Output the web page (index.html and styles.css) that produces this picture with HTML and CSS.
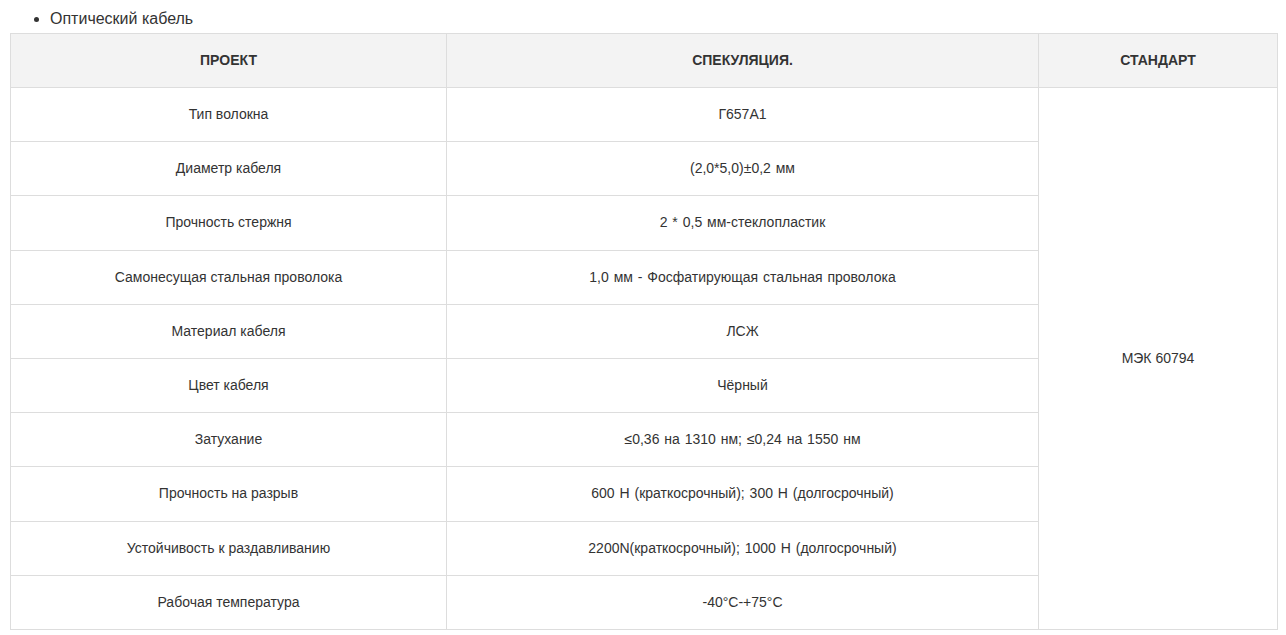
FILE: index.html
```html
<!DOCTYPE html>
<html lang="ru">
<head>
<meta charset="utf-8">
<title>Оптический кабель</title>
<link rel="stylesheet" href="styles.css">
</head>
<body>
<ul class="list">
  <li>Оптический кабель</li>
</ul>
<table class="spec">
  <colgroup>
    <col class="c1"><col class="c2"><col class="c3">
  </colgroup>
  <thead>
    <tr><th>ПРОЕКТ</th><th>СПЕКУЛЯЦИЯ.</th><th>СТАНДАРТ</th></tr>
  </thead>
  <tbody>
    <tr><td>Тип волокна</td><td class="num">Г657А1</td><td rowspan="10">МЭК 60794</td></tr>
    <tr><td>Диаметр кабеля</td><td class="num">(2,0*5,0)±0,2 мм</td></tr>
    <tr><td>Прочность стержня</td><td class="num">2 * 0,5 мм-стеклопластик</td></tr>
    <tr><td>Самонесущая стальная проволока</td><td class="num">1,0 мм - Фосфатирующая стальная проволока</td></tr>
    <tr><td>Материал кабеля</td><td class="num">ЛСЖ</td></tr>
    <tr><td>Цвет кабеля</td><td class="num">Чёрный</td></tr>
    <tr><td>Затухание</td><td class="num">≤0,36 на 1310 нм; ≤0,24 на 1550 нм</td></tr>
    <tr><td>Прочность на разрыв</td><td class="num">600 Н (краткосрочный); 300 Н (долгосрочный)</td></tr>
    <tr><td>Устойчивость к раздавливанию</td><td class="num">2200N(краткосрочный); 1000 Н (долгосрочный)</td></tr>
    <tr><td>Рабочая температура</td><td class="num">-40°C-+75°C</td></tr>
  </tbody>
</table>
</body>
</html>
```
FILE: styles.css
```css
html, body {
  margin: 0;
  padding: 0;
  background: #fff;
}
body {
  padding: 0 8px 0 10px;
  font-family: "Liberation Sans", Arial, sans-serif;
  color: #333;
}
.list {
  margin: 0 0 2px;
  padding: 7px 0 0 40px;
  font-size: 16px;
  line-height: 24px;
  color: #333;
}
.spec {
  width: 100%;
  border-collapse: collapse;
  table-layout: fixed;
  font-size: 14px;
}
.c1 { width: 436px; }
.c2 { width: 592px; }
.spec th, .spec td {
  border: 1px solid #dddddd;
  text-align: center;
  vertical-align: middle;
  padding: 0 8px 1px;
}
.spec th {
  height: 52px;
  background: #f3f3f3;
  font-weight: bold;
  font-size: 14px;
  color: #333;
}
.spec td {
  height: 52.2px;
  color: #333;
}
.spec td.num {
  font-size: 14px;
  word-spacing: 1px;
}
```
